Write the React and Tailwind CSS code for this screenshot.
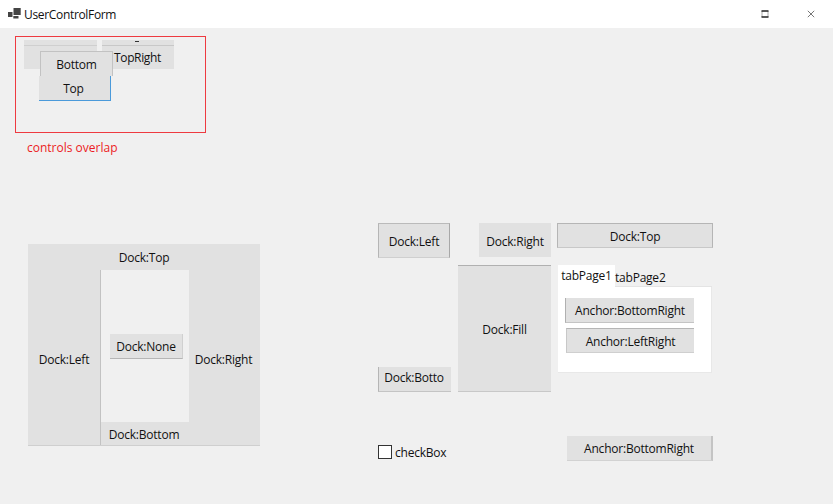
import React from 'react';

function Button({ className = '', label = 'relative top-px', children }) {
  return (
    <div className={`flex shrink-0 items-center justify-center bg-[#e1e1e1] ${className}`}>
      <span className={label}>{children}</span>
    </div>
  );
}

function TitleBar() {
  return (
    <header className="flex h-7 items-center bg-white">
      <svg className="ml-2 h-[12px] w-[13px] shrink-0" viewBox="0 0 13 12">
        <rect x="0" y="4" width="4.5" height="5" fill="#444" />
        <rect x="5.5" y="0" width="7.2" height="7" fill="#444" />
        <path d="M5.3 8H10.5V10.5H5.3Z" fill="#444" />
      </svg>
      <span className="relative top-px ml-[3px] tracking-[-0.33px]">UserControlForm</span>
      <svg className="mr-[38px] ml-auto h-2 w-2" viewBox="0 0 8 8">
        <path d="M1 1V7M7 1V7" stroke="#aaa" />
        <path d="M0.5 1H7.5M0.5 7H7.5" stroke="#222" strokeWidth="1.3" />
      </svg>
      <svg className="mr-[18px] h-2 w-2" viewBox="0 0 8 8">
        <path d="M0.8 0.8L7.2 7.2M7.2 0.8L0.8 7.2" stroke="#777" />
      </svg>
    </header>
  );
}

function OverlapPanel() {
  return (
    <section className="relative h-[97px] w-[191px] border border-[#ee3a40]">
      <div className="absolute top-[3px] left-[8px] h-[29px] w-[73px] bg-[#e1e1e1] pt-[5px]">
        <div className="h-px bg-[#cfcfcf]" />
      </div>
      <div className="absolute top-[3px] left-[86px] h-[29px] w-[72px] bg-[#e1e1e1] pt-[5px]">
        <div className="h-px bg-[#c8c8c8]" />
      </div>
      <div className="absolute top-[4px] left-[119px] h-px w-[4px] bg-[#333]" />
      <span className="absolute top-[13px] left-[98px] tracking-[-0.35px]">TopRight</span>
      <Button className="absolute top-[14px] left-[24px] h-[25px] w-[73px] border-t border-r border-l border-[#c2c2c2]">
        Bottom
      </Button>
      <Button className="absolute top-[39px] left-[23px] h-[25px] w-[72px] border-r border-b border-[#4a9ada]" label="relative top-px right-px">
        Top
      </Button>
    </section>
  );
}

function DockGroup() {
  return (
    <section className="mt-[89px] ml-[13px] flex h-[202px] w-[232px] flex-col border-b border-[#cfcfcf] bg-[#e1e1e1]">
      <div className="flex h-[26px] items-center justify-center">
        <span className="relative top-px">Dock:Top</span>
      </div>
      <div className="flex flex-1">
        <Button className="w-[73px] border-r border-[#c2c2c2]" label="relative top-[2px]">
          Dock:Left
        </Button>
        <div className="flex w-[88px] flex-col">
          <div className="flex h-[152px] justify-center bg-[#f0f0f0] pt-[64px] pl-[3px]">
            <Button className="h-[25px] w-[73px] border-r border-b border-r-[#d0d0d0] border-b-[#b5b5b5]" label="relative top-px">
              Dock:None
            </Button>
          </div>
          <Button className="flex-1" label="relative top-px right-px">Dock:Bottom</Button>
        </div>
        <Button className="w-[71px]" label="relative top-[2px] right-px">Dock:Right</Button>
      </div>
    </section>
  );
}

function TabControl() {
  return (
    <div className="mt-[17px] ml-px w-[154px]">
      <div className="flex h-[22px]">
        <div className="flex w-[57px] justify-center bg-white pt-[3px]">tabPage1</div>
        <div className="flex-1 border-b border-[#e4e4e4] pt-[5px]">tabPage2</div>
      </div>
      <div className="flex h-[86px] flex-col items-end gap-[5px] border-r border-b border-[#e8e8e8] bg-white pt-[11px] pr-[17px]">
        <Button className="h-[25px] w-[129px] border-b border-l border-b-[#c4c4c4] border-l-[#b0b0b0]">
          Anchor:BottomRight
        </Button>
        <Button className="h-[25px] w-[128px] border-t border-b border-l border-t-[#b5b5b5] border-b-[#cfcfcf] border-l-[#c8c8c8]">
          Anchor:LeftRight
        </Button>
      </div>
    </div>
  );
}

export default function App() {
  return (
    <div className="h-[504px] w-[833px] overflow-hidden bg-[#f0f0f0] font-['Open_Sans','Noto_Sans',sans-serif] text-[12px] leading-[16px] tracking-[-0.22px] whitespace-nowrap text-[#111]">
      <TitleBar />
      <main className="flex">
        <div className="w-[363px] pt-2 pl-[15px]">
          <OverlapPanel />
          <p className="mt-[7px] -mb-px ml-[12px] tracking-normal text-[#ec1c24]">controls overlap</p>
          <DockGroup />
        </div>
        <div className="w-[350px] pt-[195px] pl-[15px]">
          <div className="flex">
            <div className="w-[173px] shrink-0">
              <div className="flex justify-between">
                <Button className="h-[35px] w-[72px] border border-t-[#bababa] border-r-[#a8a8a8] border-b-[#cfcfcf] border-l-[#b5b5b5]">
                  Dock:Left
                </Button>
                <Button className="h-[34px] w-[72px]" label="relative top-[2px]">
                  Dock:Right
                </Button>
              </div>
              <div className="mt-[7px] flex items-end justify-between">
                <Button className="h-[25px] w-[73px] border-b border-l border-b-[#c4c4c4] border-l-[#b5b5b5]" label="relative -top-px right-px">
                  Dock:Botto
                </Button>
                <Button className="h-[127px] w-[93px] border-t border-b border-t-[#b0b0b0] border-b-[#c8c8c8]">
                  Dock:Fill
                </Button>
              </div>
            </div>
            <div className="ml-[6px]">
              <Button className="h-[25px] w-[156px] border border-t-[#b5b5b5] border-r-[#b5b5b5] border-b-[#c8c8c8] border-l-[#b5b5b5]">
                Dock:Top
              </Button>
              <TabControl />
            </div>
          </div>
          <div className="mt-[44px] flex items-start justify-between">
            <div className="flex items-center pt-[8px]">
              <div className="size-[14px] shrink-0 border border-[#333] bg-white" />
              <span className="relative top-px ml-[3px]">checkBox</span>
            </div>
            <Button className="h-[25px] w-[146px] border-r-2 border-b border-r-[#c4c4c4] border-b-[#d2d2d2]">
              Anchor:BottomRight
            </Button>
          </div>
        </div>
      </main>
    </div>
  );
}
